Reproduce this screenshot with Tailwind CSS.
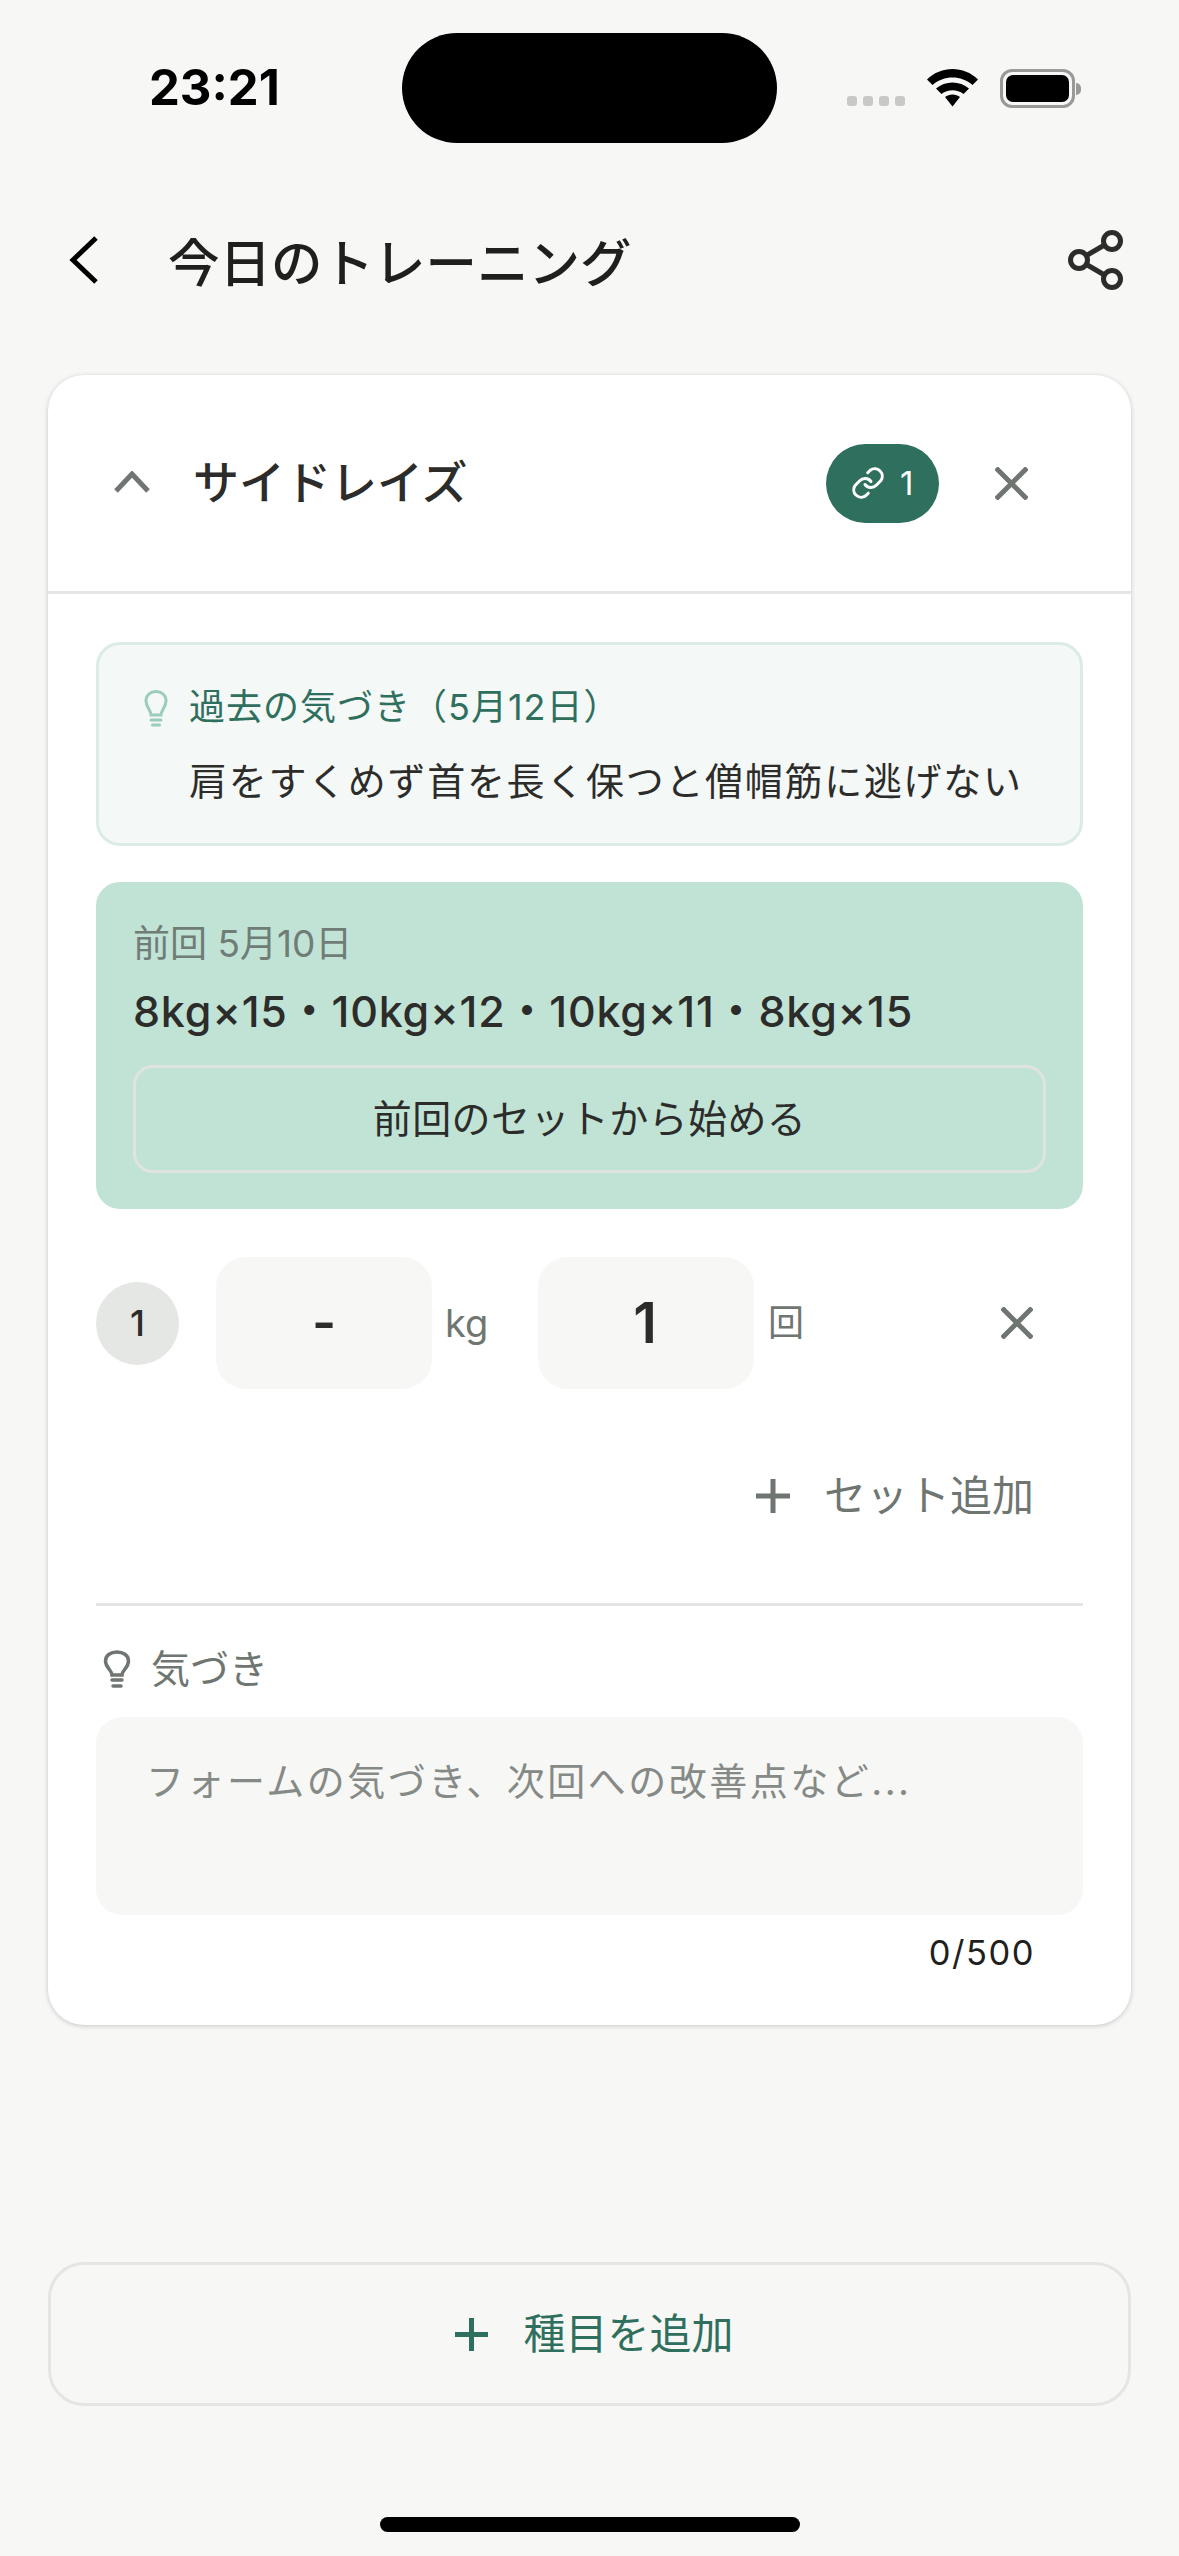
<!DOCTYPE html>
<html lang="ja">
<head>
    <meta charset="UTF-8">
    <meta name="viewport" content="width=device-width, initial-scale=1.0">
    <title>今日のトレーニング</title>
    <script src="https://cdn.jsdelivr.net/npm/@tailwindcss/browser@4"></script>
</head>
<body class="bg-[#f7f7f5]">
<div class="relative w-[1179px] h-[2556px] flex flex-col bg-[#f7f7f5] text-[#2c2c2a] font-['Inter','Noto_Sans_CJK_JP',sans-serif] overflow-hidden">

    <!-- Dynamic island -->
    <div class="absolute left-[402px] top-[33px] w-[375px] h-[110px] rounded-full bg-black"></div>

    <!-- Status bar -->
    <div class="h-[190px] shrink-0 flex items-start justify-between pt-[58px] pl-[149px] pr-[98px]">
        <span class="text-[49px] leading-[60px] font-bold text-black">23:21</span>
        <div class="flex items-start pt-[11px]">
            <div class="flex gap-[6px] mt-[27px] mr-[22px]">
                <span class="w-[10px] h-[10px] rounded-[3px] bg-[#c8c8c6]"></span>
                <span class="w-[10px] h-[10px] rounded-[3px] bg-[#c8c8c6]"></span>
                <span class="w-[10px] h-[10px] rounded-[3px] bg-[#c8c8c6]"></span>
                <span class="w-[10px] h-[10px] rounded-[3px] bg-[#c8c8c6]"></span>
            </div>
            <svg class="w-[51px] h-[38px] mr-[22px]" viewBox="0 0 51 38" fill="#000">
                <path d="M0 10.5C14 -3.5 37 -3.5 51 10.5L45.5 16C34.5 6 16.5 6 5.500 16Z"/>
                <path d="M9 19.500C18 11.500 33 11.500 42 19.500L36.500 25C30 20 21 20 14.500 25Z"/>
                <path d="M18 28C22 24.500 29 24.500 33 28L25.500 37.500Z"/>
            </svg>
            <div class="flex items-center">
                <div class="w-[75px] h-[39px] rounded-[12px] border-[3px] border-[#999] p-[3px]">
                    <div class="w-full h-full rounded-[7px] bg-black"></div>
                </div>
                <span class="w-[5px] h-[12px] ml-[1px] rounded-r-full bg-[#999]"></span>
            </div>
        </div>
    </div>

    <!-- Nav bar -->
    <div class="h-[140px] shrink-0 flex items-center pl-[69px] pr-[56px]">
        <svg class="w-[29px] h-[48px] shrink-0" viewBox="0 0 29 48" fill="none" stroke="#000" stroke-width="5">
            <path d="M27 2L4 24L27 46"/>
        </svg>
        <h1 class="ml-[70px] mt-[6px] text-[51.500px] leading-[60px] font-medium text-[#1f1f1d]">今日のトレーニング</h1>
        <svg class="ml-auto w-[56px] h-[60px] shrink-0" viewBox="0 0 56 60" fill="none" stroke="#2c2c2a" stroke-width="5">
            <circle cx="45" cy="11" r="8.500"/>
            <circle cx="12" cy="30" r="8.500"/>
            <circle cx="45" cy="49" r="8.500"/>
            <path d="M19.500 25.500L37.500 15M19.500 34.500L37.500 45"/>
        </svg>
    </div>

    <!-- Exercise card -->
    <div class="mx-[48px] mt-[45px] h-[1650px] shrink-0 rounded-[36px] bg-white shadow-[0_1px_5px_rgba(0,0,0,0.2)] flex flex-col">
        <!-- Card header -->
        <div class="h-[219px] shrink-0 flex items-center pl-[66px] pr-[103px] pb-[3px] border-b-[3px] border-[#e5e6e3]">
            <svg class="w-[36px] h-[22px] shrink-0" viewBox="0 0 36 22" fill="none" stroke="#6f7671" stroke-width="5">
                <path d="M2 20L18 3L34 20"/>
            </svg>
            <h2 class="ml-[43px] text-[46px] leading-[56px] font-medium">サイドレイズ</h2>
            <div class="ml-auto mt-[3px] w-[113px] h-[79px] rounded-[40px] bg-[#2f6f5e] flex items-center pl-[24px] gap-[14px] text-white">
                <svg class="w-[36px] h-[36px] shrink-0" viewBox="0 0 24 24" fill="none" stroke="#fff" stroke-width="2" stroke-linecap="round" stroke-linejoin="round">
                    <path d="M10 13a5 5 0 0 0 7.500.500l3-3a5 5 0 0 0-7-7l-1.700 1.700"/>
                    <path d="M14 11a5 5 0 0 0-7.500-.500l-3 3a5 5 0 0 0 7 7l1.700-1.700"/>
                </svg>
                <span class="text-[33px] leading-[40px]">1</span>
            </div>
            <svg class="ml-[56px] mt-[3px] w-[33px] h-[33px] shrink-0" viewBox="0 0 33 33" fill="none" stroke="#6f7671" stroke-width="5">
                <path d="M1 1L32 32M32 1L1 32"/>
            </svg>
        </div>

        <!-- Card body -->
        <div class="flex-1 flex flex-col pt-[48px] px-[48px]">
            <!-- Past insight -->
            <div class="h-[204px] shrink-0 rounded-[24px] bg-[#f4f8f6] border-[3px] border-[#dcebe5] pt-[35px] pl-[45px]">
                <div class="flex items-center h-[54px]">
                    <svg class="w-[24px] h-[37px] mt-[3px] shrink-0" viewBox="0 0 24 37" fill="none" stroke="#9accb9" stroke-width="3" stroke-linecap="round">
                        <path d="M7 25C7 20 2 17 2 11C2 5 6.500 1.500 12 1.500C17.500 1.500 22 5 22 11C22 17 17 20 17 25Z"/>
                        <path d="M7 30H17M8.500 35H15.500"/>
                    </svg>
                    <span class="ml-[21px] text-[36px] leading-[54px] tracking-[1px] text-[#2f6f5e]">過去の気づき（5月12日）</span>
                </div>
                <p class="ml-[45px] mt-[20px] text-[38px] leading-[54px] tracking-[1.700px]">肩をすくめず首を長く保つと僧帽筋に逃げない</p>
            </div>

            <!-- Previous sets -->
            <div class="mt-[36px] h-[327px] shrink-0 rounded-[24px] bg-[#c0e3d6] px-[37px] pt-[37px] flex flex-col">
                <p class="text-[37px] leading-[50px] text-[#6f7d76]">前回 5月10日</p>
                <p class="mt-[16px] text-[43px] leading-[52px] tracking-[0.800px] font-medium">8kg×15・10kg×12・10kg×11・8kg×15</p>
                <div class="mt-[28px] h-[108px] rounded-[20px] border-[3px] border-[#e0e4e1] flex items-center justify-center text-[39px] tracking-[0.400px]">前回のセットから始める</div>
            </div>

            <!-- Set row -->
            <div class="mt-[48px] h-[132px] shrink-0 flex items-center">
                <div class="w-[83px] h-[83px] rounded-full bg-[#e5e7e4] flex items-center justify-center text-[36px] font-medium">1</div>
                <div class="ml-[37px] w-[216px] h-[132px] rounded-[30px] bg-[#f7f7f5] flex items-center justify-center text-[52px] font-semibold">-</div>
                <span class="ml-[13px] w-[92px] text-[38px] text-[#6f7671]">kg</span>
                <div class="ml-[1px] w-[216px] h-[132px] rounded-[30px] bg-[#f7f7f5] flex items-center justify-center pr-[2px] text-[56px] font-semibold">1</div>
                <span class="ml-[14px] text-[36px] text-[#6f7671]">回</span>
                <svg class="ml-auto mr-[50px] w-[32px] h-[32px] shrink-0" viewBox="0 0 32 32" fill="none" stroke="#6f7671" stroke-width="5">
                    <path d="M1 1L31 31M31 1L1 31"/>
                </svg>
            </div>

            <!-- Add set -->
            <div class="mt-[77px] h-[60px] shrink-0 flex items-center justify-end pr-[49px] text-[#6f7671]">
                <svg class="w-[34px] h-[34px] shrink-0" viewBox="0 0 34 34" fill="none" stroke="#6f7671" stroke-width="5">
                    <path d="M17 0V34M0 17H34"/>
                </svg>
                <span class="ml-[34px] text-[42px] leading-[60px]">セット追加</span>
            </div>

            <!-- Notes -->
            <div class="mt-[77px] h-[3px] shrink-0 bg-[#e5e6e3]"></div>
            <div class="mt-[38px] h-[50px] shrink-0 flex items-center pl-[7px] text-[#6f7671]">
                <svg class="w-[28px] h-[38px] shrink-0" viewBox="0 0 28 38" fill="none" stroke="#6f7671" stroke-width="3.500" stroke-linecap="round">
                    <path d="M9 25C9 20 2.500 18 2.500 11C2.500 5 8 2 14 2C20 2 25.500 5 25.500 11C25.500 18 19 20 19 25Z"/>
                    <path d="M9 30H19M10 36H18"/>
                </svg>
                <span class="ml-[20px] text-[39px] leading-[50px]">気づき</span>
            </div>
            <div class="mt-[23px] h-[198px] shrink-0 rounded-[26px] bg-[#f7f7f5] pl-[50px] pt-[36px] text-[38px] leading-[56px] tracking-[2.500px] text-[#858a86]">フォームの気づき、次回への改善点など...</div>
            <p class="mt-[18px] pr-[48px] text-right text-[34.500px] leading-[40px] tracking-[1.500px] text-[#1f1f1d]">0/500</p>
        </div>
    </div>

    <!-- Add exercise -->
    <div class="mx-[48px] mt-[237px] h-[144px] shrink-0 rounded-[36px] border-[3px] border-[#e5e6e3] flex items-center justify-center pl-[10px] text-[#2f6f5e]">
        <svg class="w-[33px] h-[33px] shrink-0" viewBox="0 0 33 33" fill="none" stroke="#2f6f5e" stroke-width="5">
            <path d="M16.500 0V33M0 16.500H33"/>
        </svg>
        <span class="ml-[35px] text-[42px] leading-[60px]">種目を追加</span>
    </div>

    <!-- Home indicator -->
    <div class="absolute left-[380px] top-[2517px] w-[420px] h-[15px] rounded-full bg-black"></div>
</div>
</body>
</html>
